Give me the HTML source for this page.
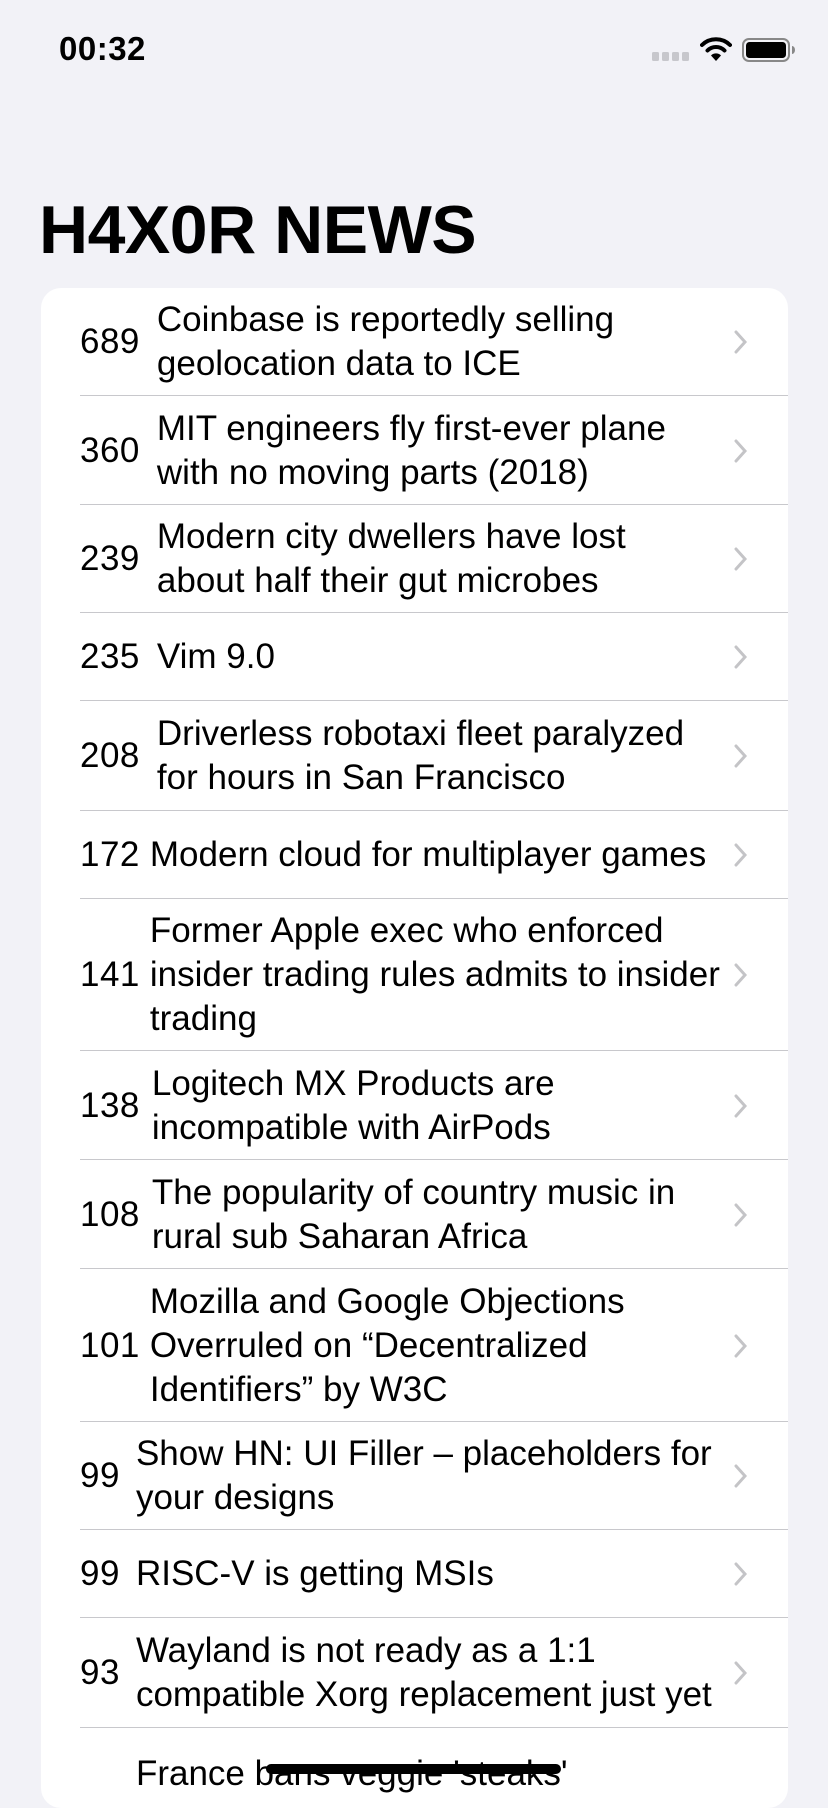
<!DOCTYPE html>
<html><head><meta charset="utf-8"><style>
*{margin:0;padding:0;box-sizing:border-box}
html,body{width:828px;height:1792px;overflow:hidden;background:#f2f2f7;font-family:"Liberation Sans",sans-serif;color:#000}
.time{position:absolute;left:59px;top:30px;font-size:33px;font-weight:bold;letter-spacing:0.5px}
.h1{position:absolute;left:39px;top:191px;font-size:68px;font-weight:bold;letter-spacing:-0.5px}
.card{position:absolute;left:41px;top:288px;width:747px;height:1520px;background:#fff;border-radius:20px;overflow:hidden}
.row{position:relative;display:flex;align-items:center;padding-left:39px;padding-right:70px}
.row::after{content:"";position:absolute;left:39px;right:0;bottom:0;height:1.5px;background:#c8c8cc}
.n{font-size:35px;margin-right:17px;white-space:nowrap;letter-spacing:0.5px}
.t{font-size:35px;line-height:44px;white-space:nowrap;transform:scaleX(1.0);transform-origin:left}
.chev{position:absolute;right:40px;top:50%;margin-top:-12px;width:14px;height:24px}
.home{position:absolute;left:266px;top:1764px;width:295px;height:10px;border-radius:5px;background:#000}
</style></head><body>
<div class="time">00:32</div>
<svg style="position:absolute;left:652px;top:50px" width="38" height="12"><rect x="0" y="2" width="7" height="9" rx="1.5" fill="#c7c7cc"/><rect x="10" y="2" width="7" height="9" rx="1.5" fill="#c7c7cc"/><rect x="20" y="2" width="7" height="9" rx="1.5" fill="#c7c7cc"/><rect x="30" y="2" width="7" height="9" rx="1.5" fill="#c7c7cc"/></svg>
<svg style="position:absolute;left:700px;top:36px" width="32" height="26" viewBox="0 0 32 26"><path d="M2 9 A20 20 0 0 1 30 9" stroke="#000" stroke-width="4" fill="none" stroke-linecap="round"/><path d="M7.5 14.5 A12 12 0 0 1 24.5 14.5" stroke="#000" stroke-width="4" fill="none" stroke-linecap="round"/><path d="M16 25 L11 19.5 A7 7 0 0 1 21 19.5 Z" fill="#000"/></svg>
<svg style="position:absolute;left:742px;top:38px" width="54" height="24"><rect x="1" y="1" width="46" height="22" rx="6" fill="none" stroke="#888" stroke-width="2"/><rect x="4" y="4" width="40" height="16" rx="3.5" fill="#000"/><path d="M50 8 a3 4 0 0 1 0 8z" fill="#888"/></svg>
<div class="h1">H4X0R NEWS</div>
<div class="card">
<div class="row" style="height:108px"><span class="n">689</span><span class="t">Coinbase is reportedly selling<br>geolocation data to ICE</span><svg class="chev"><path d="M2 2 L11 12 L2 22" stroke="#c4c4c7" stroke-width="3" fill="none" stroke-linecap="round"/></svg></div>
<div class="row" style="height:109px"><span class="n">360</span><span class="t">MIT engineers fly first-ever plane<br>with no moving parts (2018)</span><svg class="chev"><path d="M2 2 L11 12 L2 22" stroke="#c4c4c7" stroke-width="3" fill="none" stroke-linecap="round"/></svg></div>
<div class="row" style="height:108px"><span class="n">239</span><span class="t">Modern city dwellers have lost<br>about half their gut microbes</span><svg class="chev"><path d="M2 2 L11 12 L2 22" stroke="#c4c4c7" stroke-width="3" fill="none" stroke-linecap="round"/></svg></div>
<div class="row" style="height:88px"><span class="n">235</span><span class="t">Vim 9.0</span><svg class="chev"><path d="M2 2 L11 12 L2 22" stroke="#c4c4c7" stroke-width="3" fill="none" stroke-linecap="round"/></svg></div>
<div class="row" style="height:110px"><span class="n">208</span><span class="t">Driverless robotaxi fleet paralyzed<br>for hours in San Francisco</span><svg class="chev"><path d="M2 2 L11 12 L2 22" stroke="#c4c4c7" stroke-width="3" fill="none" stroke-linecap="round"/></svg></div>
<div class="row" style="height:88px"><span class="n" style="margin-right:10px">172</span><span class="t">Modern cloud for multiplayer games</span><svg class="chev"><path d="M2 2 L11 12 L2 22" stroke="#c4c4c7" stroke-width="3" fill="none" stroke-linecap="round"/></svg></div>
<div class="row" style="height:152px"><span class="n" style="margin-right:10px">141</span><span class="t">Former Apple exec who enforced<br>insider trading rules admits to insider<br>trading</span><svg class="chev"><path d="M2 2 L11 12 L2 22" stroke="#c4c4c7" stroke-width="3" fill="none" stroke-linecap="round"/></svg></div>
<div class="row" style="height:109px"><span class="n" style="margin-right:12px">138</span><span class="t">Logitech MX Products are<br>incompatible with AirPods</span><svg class="chev"><path d="M2 2 L11 12 L2 22" stroke="#c4c4c7" stroke-width="3" fill="none" stroke-linecap="round"/></svg></div>
<div class="row" style="height:109px"><span class="n" style="margin-right:12px">108</span><span class="t">The popularity of country music in<br>rural sub Saharan Africa</span><svg class="chev"><path d="M2 2 L11 12 L2 22" stroke="#c4c4c7" stroke-width="3" fill="none" stroke-linecap="round"/></svg></div>
<div class="row" style="height:153px"><span class="n" style="margin-right:10px">101</span><span class="t">Mozilla and Google Objections<br>Overruled on “Decentralized<br>Identifiers” by W3C</span><svg class="chev"><path d="M2 2 L11 12 L2 22" stroke="#c4c4c7" stroke-width="3" fill="none" stroke-linecap="round"/></svg></div>
<div class="row" style="height:108px"><span class="n" style="margin-right:16px">99</span><span class="t">Show HN: UI Filler – placeholders for<br>your designs</span><svg class="chev"><path d="M2 2 L11 12 L2 22" stroke="#c4c4c7" stroke-width="3" fill="none" stroke-linecap="round"/></svg></div>
<div class="row" style="height:88px"><span class="n" style="margin-right:16px">99</span><span class="t">RISC-V is getting MSIs</span><svg class="chev"><path d="M2 2 L11 12 L2 22" stroke="#c4c4c7" stroke-width="3" fill="none" stroke-linecap="round"/></svg></div>
<div class="row" style="height:110px"><span class="n" style="margin-right:16px">93</span><span class="t">Wayland is not ready as a 1:1<br>compatible Xorg replacement just yet</span><svg class="chev"><path d="M2 2 L11 12 L2 22" stroke="#c4c4c7" stroke-width="3" fill="none" stroke-linecap="round"/></svg></div>
<div class="row" style="height:110px;align-items:flex-start;padding-top:24px"><span class="n" style="margin-right:16px;visibility:hidden">90</span><span class="t">France bans veggie 'steaks'</span></div>
</div>
<div class="home"></div>
</body></html>
